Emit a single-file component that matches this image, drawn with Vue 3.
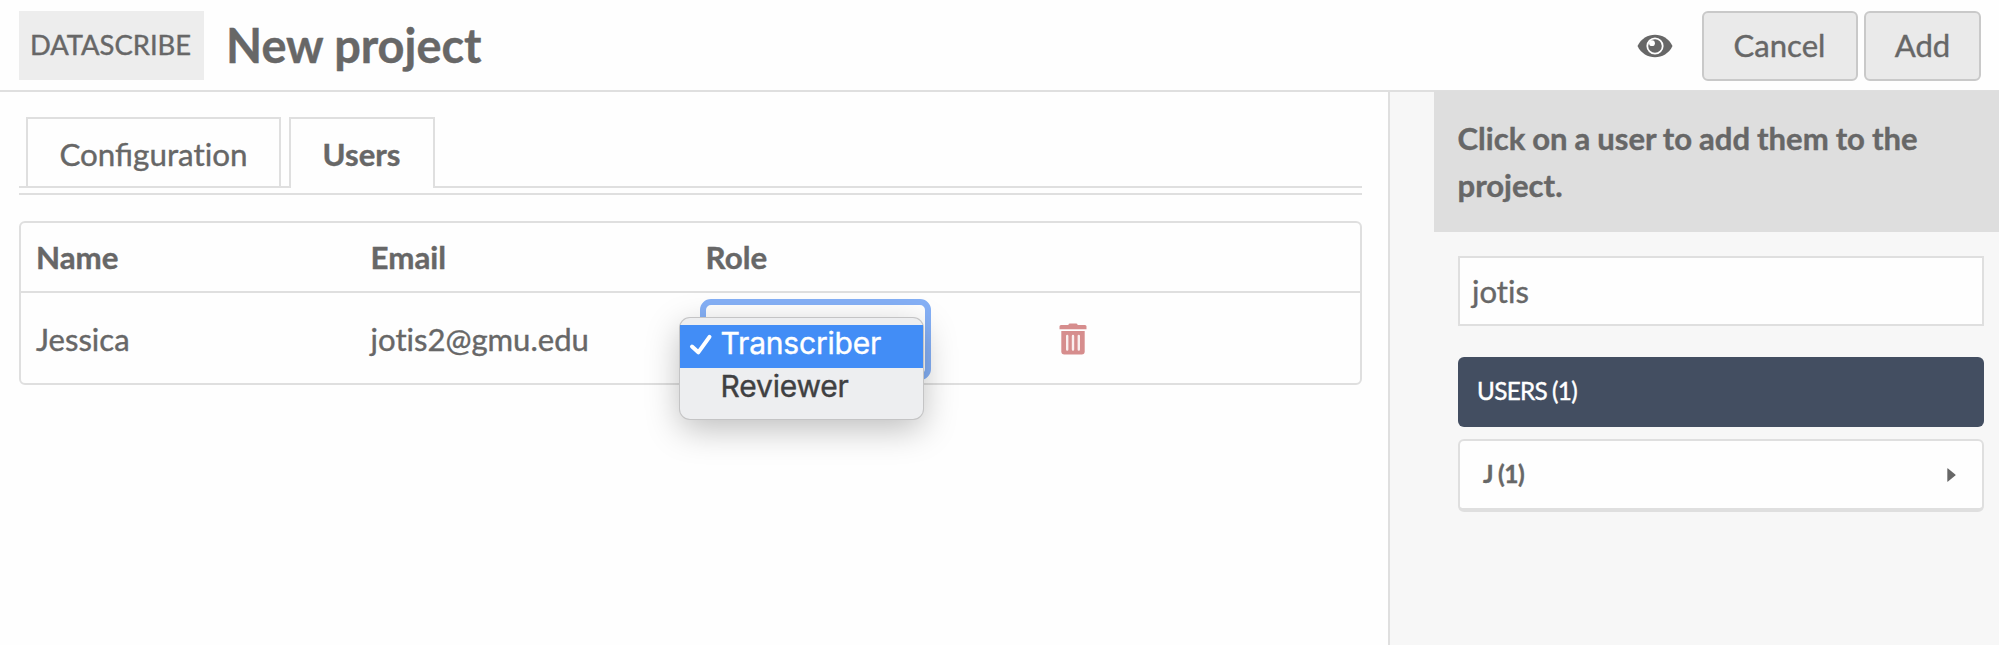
<script setup>
const users = [{ name: 'Jessica', email: 'jotis2@gmu.edu' }]
const roles = ['Transcriber', 'Reviewer']
const selected = 'Transcriber'
</script>

<template>
  <div class="page">
    <header class="topbar">
      <span class="badge">DATASCRIBE</span>
      <h1>New project</h1>
      <div class="actions">
        <svg class="eye" viewBox="0 0 36 24" width="36" height="24">
          <path d="M0.5 12C4 4.5 11 0.7 18 0.7S32 4.5 35.5 12C32 19.5 25 23.3 18 23.3S4 19.5 0.5 12Z" fill="#676767" />
          <circle cx="18" cy="12" r="7.7" fill="#676767" stroke="#fff" stroke-width="1.8" />
          <circle cx="15" cy="9.2" r="2.9" fill="#fff" />
        </svg>
        <button class="btn cancel">Cancel</button>
        <button class="btn add">Add</button>
      </div>
    </header>

    <div class="body">
      <main>
        <nav class="tabs">
          <a class="tab config"><span class="joined">Confi</span>guration</a>
          <a class="tab users active">Users</a>
        </nav>
        <div class="rule"></div>

        <section class="table">
          <div class="row head">
            <span>Name</span><span>Email</span><span>Role</span><span></span>
          </div>
          <div v-for="user in users" :key="user.email" class="row">
            <span>{{ user.name }}</span>
            <span>{{ user.email }}</span>
            <div class="role">
              <div class="select"></div>
              <ul class="menu">
                <li v-for="role in roles" :key="role" :class="{ on: role === selected }">
                  <svg v-if="role === selected" class="check" viewBox="0 0 24 22" width="24" height="22">
                    <path d="M3 12.5L9.3 18.3L20.5 2.8" fill="none" stroke="#fff" stroke-width="4" stroke-linecap="round" stroke-linejoin="round" />
                  </svg>
                  <b>{{ role }}</b>
                </li>
              </ul>
            </div>
            <div class="remove">
              <svg viewBox="0 0 28 32" width="28" height="32">
                <path d="M9.5 2V1.6Q9.5 0.5 11 0.5H17Q18.5 0.5 18.5 1.6V2H26Q27.5 2 27.5 3.5V6.3H0.5V3.5Q0.5 2 2 2Z" fill="#d68d8d" />
                <path d="M2.3 8H25.7V28.5Q25.7 31.5 22.7 31.5H5.3Q2.3 31.5 2.3 28.5Z" fill="#d68d8d" />
                <path d="M8.2 13V26.5M14 13V26.5M19.8 13V26.5" stroke="#faeeee" stroke-width="2.4" stroke-linecap="round" />
              </svg>
            </div>
          </div>
        </section>
      </main>

      <aside>
        <div class="hint">Click on a user to add them to the project.</div>
        <div class="panel">
          <div class="search">jotis</div>
          <div class="group">USERS (1)</div>
          <div class="letter">
            <span>J (1)</span>
            <svg viewBox="0 0 9 14" width="9" height="14"><path d="M0.3 0.8Q0.3 0 1 0.4L8.3 6.4Q8.9 7 8.3 7.6L1 13.6Q0.3 14 0.3 13.2Z" fill="#676767" /></svg>
          </div>
        </div>
      </aside>
    </div>
  </div>
</template>

<style>
body {
  margin: 0;
  overflow: hidden;
}
</style>

<style scoped>
* {
  box-sizing: border-box;
}
.page {
  width: 1999px;
  height: 645px;
  display: flex;
  flex-direction: column;
  background: #fefefe;
  color: #676767;
  font: 31.07px/46.6px Lato, "Open Sans", sans-serif;
  font-variant-ligatures: none;
  -webkit-text-stroke: 0.4px;
}
.joined {
  font-variant-ligatures: normal;
}
.topbar {
  height: 92px;
  flex: none;
  display: flex;
  align-items: flex-start;
  padding: 11px 18px 0 19px;
  border-bottom: 2px solid #dfdfdf;
}
.badge {
  width: 185px;
  height: 69px;
  padding-right: 2px;
  background: #ededed;
  font-size: 27.4px;
  line-height: 68px;
  text-align: center;
  white-space: nowrap;
}
h1 {
  margin: 0 0 0 22px;
  font-size: 46.9px;
  line-height: 69px;
  font-weight: 700;
  white-space: nowrap;
}
.actions {
  margin-left: auto;
  display: flex;
}
.eye {
  margin: 23px 29px 0 0;
}
.btn {
  height: 70px;
  padding: 0 1px 2px 0;
  border: 2px solid #c9c9c9;
  border-radius: 6px;
  background: #eaeaea;
  color: inherit;
  font: inherit;
  -webkit-text-stroke: inherit;
}
.cancel {
  width: 156px;
  margin-right: 6px;
}
.add {
  width: 117px;
  padding-right: 0;
}
.body {
  flex: 1;
  display: flex;
}
main {
  width: 1388px;
  padding: 25px 26px 0 19px;
}
.tabs {
  height: 71px;
  display: flex;
  padding-left: 7px;
  border-bottom: 2px solid #dfdfdf;
}
.tab {
  height: 69px;
  border: 2px solid #dfdfdf;
  border-bottom: 0;
  line-height: 70px;
  text-align: center;
}
.config {
  width: 255px;
  font-size: 31.4px;
}
.users {
  width: 146px;
  margin-left: 8px;
  padding-right: 1px;
}
.active {
  height: 71px;
  background: #fefefe;
  font-weight: 700;
}
.rule {
  height: 7px;
  border-bottom: 2px solid #dfdfdf;
}
.table {
  margin-top: 26px;
  height: 164px;
  border: 2px solid #dfdfdf;
  border-radius: 6px;
}
.row {
  display: grid;
  grid-template-columns: 334.6px 335px 335px 1fr;
  padding-left: 15px;
  height: 91px;
  line-height: 92px;
}
.head {
  height: 70px;
  line-height: 68px;
  font-size: 31.3px;
  font-weight: 700;
  border-bottom: 2px solid #dfdfdf;
}
.role {
  position: relative;
}
.select {
  width: 231px;
  height: 81px;
  margin: 6px 0 0 -6px;
  border: 6px solid #85b0f6;
  border-radius: 11px;
}
.menu {
  position: absolute;
  left: -26px;
  top: 25px;
  width: 243px;
  height: 101px;
  margin: 0;
  padding: 7px 0 0;
  list-style: none;
  background: #edeef0;
  border-radius: 10px;
  box-shadow: 0 0 0 1px #c4c4c5, 0 10px 34px rgba(0, 0, 0, 0.26);
  color: #3f4042;
  font: 30px/42px Inter, sans-serif;
}
.menu li {
  display: flex;
  align-items: center;
  height: 43px;
  padding: 0 0 7px 41px;
}
.menu b {
  font-weight: 400;
  letter-spacing: -0.2px;
}
.menu .on {
  background: #428df6;
  color: #fff;
}
.check {
  margin: 4px 8px 0 -32px;
}
.remove svg {
  display: block;
  margin: 30px 0 0 18px;
}
aside {
  flex: 1;
  border-left: 2px solid #dfdfdf;
  background: #f7f7f7;
}
.hint {
  margin: -1px 0 0 44px;
  height: 141px;
  padding: 24px 20px 0 23.5px;
  background: #dedede;
  font-weight: 700;
  word-spacing: -0.6px;
}
.panel {
  padding: 24px 15px 0 68px;
}
.search {
  height: 70px;
  padding-left: 12px;
  border: 2px solid #dfdfdf;
  background: #fefefe;
  line-height: 66px;
}
.group {
  height: 70px;
  margin-top: 31px;
  padding-left: 19px;
  border-radius: 6px;
  background: #434e61;
  color: #fff;
  font-size: 24.3px;
  line-height: 68px;
  word-spacing: -0.5px;
  letter-spacing: -0.7px;
}
.letter {
  display: flex;
  align-items: center;
  justify-content: space-between;
  height: 73px;
  margin-top: 12px;
  padding: 0 26px 0 23px;
  border: 2px solid #dfdfdf;
  border-bottom-width: 4px;
  border-radius: 6px;
  background: #fefefe;
  font-size: 24.5px;
  font-weight: 700;
  word-spacing: -0.5px;
  letter-spacing: -0.5px;
}
</style>
